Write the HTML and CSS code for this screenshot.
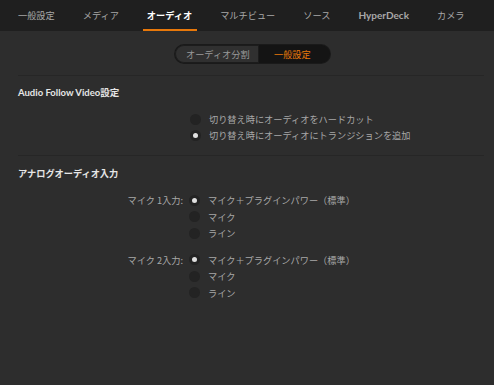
FILE: index.html
```html
<!DOCTYPE html>
<html lang="ja">
<head>
    <meta charset="UTF-8">
    <meta name="viewport" content="width=device-width, initial-scale=1.0">
    <title>オーディオ設定</title>
    <link rel="stylesheet" href="styles.css">
</head>
<body>
    <nav class="tabs">
        <div class="tab">一般設定</div>
        <div class="tab">メディア</div>
        <div class="tab active">オーディオ</div>
        <div class="tab">マルチビュー</div>
        <div class="tab">ソース</div>
        <div class="tab tab-latin">HyperDeck</div>
        <div class="tab">カメラ</div>
    </nav>

    <div class="segment-row">
        <div class="segment">
            <div class="segment-item">オーディオ分割</div>
            <div class="segment-item selected">一般設定</div>
        </div>
    </div>

    <div class="section">
        <h2 class="section-title latin">Audio Follow Video設定</h2>
        <div class="option-group">
            <div class="options">
                <div class="radio"><span class="dot"></span>切り替え時にオーディオをハードカット</div>
                <div class="radio checked"><span class="dot"></span>切り替え時にオーディオにトランジションを追加</div>
            </div>
        </div>
    </div>

    <div class="section inputs">
        <h2 class="section-title">アナログオーディオ入力</h2>
        <div class="option-group">
            <div class="option-label">マイク 1入力:</div>
            <div class="options">
                <div class="radio checked"><span class="dot"></span>マイク＋プラグインパワー（標準）</div>
                <div class="radio"><span class="dot"></span>マイク</div>
                <div class="radio"><span class="dot"></span>ライン</div>
            </div>
        </div>
        <div class="option-group">
            <div class="option-label">マイク 2入力:</div>
            <div class="options">
                <div class="radio checked"><span class="dot"></span>マイク＋プラグインパワー（標準）</div>
                <div class="radio"><span class="dot"></span>マイク</div>
                <div class="radio"><span class="dot"></span>ライン</div>
            </div>
        </div>
    </div>
</body>
</html>
```

FILE: styles.css
```css
body {
    font-family: "Noto Sans CJK JP", "Noto Sans", sans-serif;
    font-size: 9.2px;
    background-color: #2d2d2d;
    color: #b4b4b4;
    margin: 0;
    padding: 0;
    height: 385px;
    overflow: hidden;
    white-space: nowrap;
}

.tabs {
    display: flex;
    height: 31px;
    padding-left: 4px;
    background-color: #1f1f1f;
}

.tab {
    position: relative;
    padding: 0 14px;
    line-height: 31px;
    color: #a8a8a8;
}

.tab-latin {
    font-family: "Lato", "Noto Sans", sans-serif;
    font-weight: bold;
    font-size: 10px;
}

.tab.active {
    color: #ffffff;
    font-weight: bold;
}

.tab.active::after {
    content: "";
    position: absolute;
    left: 10px;
    right: 9px;
    bottom: 0;
    height: 2px;
    background-color: #e8780a;
}

.segment-row {
    display: flex;
    padding: 14px 0 0 175px;
    height: 44px;
    box-sizing: border-box;
}

.segment {
    display: flex;
    height: 18px;
    border-radius: 9px;
    background-color: #141414;
    box-shadow: 0 0 0 1px #1a1a1a;
    overflow: hidden;
}

.segment-item {
    line-height: 18px;
    color: #9a9a9a;
}

.segment-item:first-child {
    width: 84px;
    padding-left: 11px;
    background-color: #303030;
    border-radius: 9px 0 0 9px;
    box-shadow: inset 0 0 0 1px #1c1c1c;
    box-sizing: border-box;
}

.segment-item.selected {
    width: 71px;
    padding-left: 15px;
    color: #e8780a;
    box-sizing: border-box;
}

.section {
    margin: 0 10px 0 18px;
    border-top: 1px solid #262626;
    padding-bottom: 12px;
}

.section-title {
    margin: 0;
    padding-top: 9px;
    height: 24px;
    line-height: 16px;
    font-size: 9.2px;
    font-weight: bold;
    color: #e6e6e6;
    box-sizing: border-box;
}

.section-title.latin {
    font-family: "Lato", "Noto Sans CJK JP", sans-serif;
    font-size: 9.5px;
}

.option-group {
    display: flex;
    margin-top: 11px;
}

.inputs .option-group {
    margin-top: 12px;
}

.inputs .option-group + .option-group {
    margin-top: 10px;
}

.option-label {
    width: 171px;
    padding-right: 6px;
    text-align: right;
    line-height: 16px;
    color: #a8a8a8;
    box-sizing: border-box;
}

.options {
    margin-left: 172px;
}

.option-label + .options {
    margin-left: 0;
}

.radio {
    display: flex;
    align-items: center;
    height: 16px;
    color: #a8a8a8;
}

.inputs .radio {
    height: 16.5px;
}

.dot {
    display: inline-flex;
    align-items: center;
    justify-content: center;
    width: 11px;
    height: 11px;
    margin-right: 8px;
    border-radius: 50%;
    background-color: #232323;
}

.radio.checked .dot::after {
    content: "";
    width: 5px;
    height: 5px;
    border-radius: 50%;
    background-color: #e0e0e0;
}
```
